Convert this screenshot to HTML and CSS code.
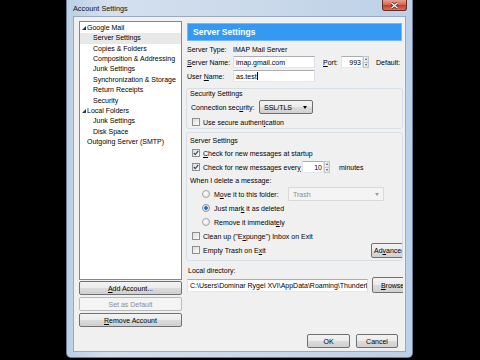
FILE: index.html
```html
<!DOCTYPE html>
<html>
<head>
<meta charset="utf-8">
<title>Account Settings</title>
<link rel="stylesheet" href="styles.css">
</head>
<body>
<div class="window">
  <div class="titlebar">
    <span class="title">Account Settings</span>
    <span class="close"><svg width="9" height="7" viewBox="0 0 9 7"><path d="M1.5 1 L7.5 6 M7.5 1 L1.5 6" stroke="#3a2020" stroke-width="2.6"/><path d="M1.5 1 L7.5 6 M7.5 1 L1.5 6" stroke="#fff" stroke-width="1.3"/></svg></span>
  </div>
  <div class="client">
    <div class="main">
      <div class="leftcol">
        <div class="tree">
          <div class="ti top"><span class="exp"></span>Google Mail</div>
          <div class="ti sel">Server Settings</div>
          <div class="ti">Copies &amp; Folders</div>
          <div class="ti">Composition &amp; Addressing</div>
          <div class="ti">Junk Settings</div>
          <div class="ti">Synchronization &amp; Storage</div>
          <div class="ti">Return Receipts</div>
          <div class="ti">Security</div>
          <div class="ti top"><span class="exp"></span>Local Folders</div>
          <div class="ti">Junk Settings</div>
          <div class="ti">Disk Space</div>
          <div class="ti top leaf">Outgoing Server (SMTP)</div>
        </div>
        <div class="btn side"><u>A</u>dd Account...</div>
        <div class="btn side disabled">Set as Default</div>
        <div class="btn side"><u>R</u>emove Account</div>
      </div>
      <div class="rightcol">
        <div class="pagehead">Server Settings</div>
        <div class="frow r1"><span class="lbl">Server Type:</span><span>IMAP Mail Server</span></div>
        <div class="frow r2">
          <span class="lbl"><u>S</u>erver Name:</span>
          <span class="input w-host">imap.gmail.com</span>
          <span class="port-lbl"><u>P</u>ort:</span>
          <span class="spin"><span class="input num">993</span><span class="arrows"><span class="up"></span><span class="dn"></span></span></span>
          <span class="deflbl">Default:</span>
        </div>
        <div class="frow r3">
          <span class="lbl">User <u>N</u>ame:</span>
          <span class="input w-host">as.test<span class="caret"></span></span>
        </div>

        <div class="group sec">
          <div class="cap">Security Settings</div>
          <div class="crow conn">
            <span class="conn-lbl">Connection sec<u>u</u>rity:</span>
            <span class="select">SSL/TLS<span class="tri"></span></span>
          </div>
          <div class="crow auth"><span class="cb"></span><span>Use secure authent<u>i</u>cation</span></div>
        </div>

        <div class="group srv">
          <div class="cap">Server Settings</div>
          <div class="crow"><span class="cb on"><svg width="6" height="6" viewBox="0 0 6 6"><path d="M0.8 3 L2.3 4.6 L5.3 0.9" fill="none" stroke="#3c4d6e" stroke-width="1.3"/></svg></span><span><u>C</u>heck for new messages at startup</span></div>
          <div class="crow"><span class="cb on"><svg width="6" height="6" viewBox="0 0 6 6"><path d="M0.8 3 L2.3 4.6 L5.3 0.9" fill="none" stroke="#3c4d6e" stroke-width="1.3"/></svg></span><span class="every-lbl">Check for new messages ever<u>y</u></span>
            <span class="spin small"><span class="input num">10</span><span class="arrows"><span class="up"></span><span class="dn"></span></span></span>
            <span class="minutes">minutes</span>
          </div>
          <div class="crow del">When I delete a message:</div>
          <div class="crow ind"><span class="rb"></span><span class="move-lbl">M<u>o</u>ve it to this folder:</span><span class="select dis">Trash<span class="tri"></span></span></div>
          <div class="crow ind"><span class="rb on"></span><span>Just mar<u>k</u> it as deleted</span></div>
          <div class="crow ind"><span class="rb"></span><span>Remove it immediat<u>e</u>ly</span></div>
          <div class="crow"><span class="cb"></span><span>Clean up ("E<u>x</u>punge") Inbox on Exit</span></div>
          <div class="crow last"><span class="cb"></span><span>Empty Trash on E<u>x</u>it</span><span class="btn adv">Ad<u>v</u>anced...</span></div>
        </div>

        <div class="loclbl">Local directory:</div>
        <div class="locrow">
          <span class="input path">C:\Users\Dominar Rygel XVI\AppData\Roaming\Thunderbird\Profiles</span>
          <span class="btn browse"><u>B</u>rowse...</span>
        </div>
      </div>
    </div>
    <div class="footer">
      <span class="btn ok">OK</span>
      <span class="btn cancel">Cancel</span>
    </div>
  </div>
</div>
</body>
</html>
```

FILE: styles.css
```css
* { box-sizing: border-box; }
html, body { margin: 0; padding: 0; }
body {
  background: #000;
  width: 480px;
  height: 360px;
  overflow: hidden;
  font-family: "Liberation Sans", Arial, sans-serif;
  font-size: 7px;
  color: #000;
}
u { text-decoration: underline; text-underline-offset: 1px; }

.window {
  margin-left: 66px;
  width: 347px;
  height: 358px;
  display: flex;
  flex-direction: column;
  padding: 0 6px 5px 6px;
  border: 1px solid #6c7f96;
  border-top: none;
  border-radius: 0 0 5px 5px;
  background: linear-gradient(to right, #bccfe6, #d4e0ee 12%, #c9d8ea 60%, #bcd0e7);
}
.titlebar {
  height: 16px;
  display: flex;
  align-items: center;
  flex: none;
}
.title { font-size: 7.3px; color: #111; }
.close {
  margin-left: auto;
  margin-right: -1px;
  align-self: flex-start;
  width: 25px;
  height: 11px;
  border: 1px solid #6b2b24;
  border-top: none;
  border-radius: 0 0 3px 3px;
  background: linear-gradient(#e8a08f, #d46a55 45%, #c0402c 55%, #d8735c);
  display: flex;
  align-items: center;
  justify-content: center;
}
.close svg { display: block; }

.client {
  flex: 1;
  background: #f0f0f0;
  border: 1px solid #97aac1;
  display: flex;
  flex-direction: column;
  padding: 4px 0 3px 5px;
}
.main { display: flex; gap: 4px; }
.leftcol { width: 103px; display: flex; flex-direction: column; }
.tree {
  height: 259px;
  border: 1px solid #828790;
  background: #fff;
  padding-top: 1px;
}
.ti {
  height: 10.36px;
  line-height: 10.36px;
  padding-left: 13px;
  white-space: nowrap;
  color: #000;
}
.ti.top { padding-left: 2px; }
.ti.top.leaf { padding-left: 7px; }
.ti.sel { background: #e8e8e8; }
.exp {
  display: inline-block;
  width: 0;
  height: 0;
  border-left: 4px solid transparent;
  border-bottom: 4px solid #333;
  margin-right: 1px;
  vertical-align: 0;
}

.btn {
  display: flex;
  align-items: center;
  justify-content: center;
  height: 14px;
  border: 1px solid #707070;
  border-radius: 2px;
  background: linear-gradient(#f3f3f3, #ebebeb 50%, #dcdcdc 50%, #d0d0d0);
  white-space: nowrap;
  flex: none;
}
.btn.side { margin-top: 2px; }
.tree + .btn.side { margin-top: 1px; }
.btn.disabled {
  border-color: #b7bbbe;
  background: #f4f4f4;
  color: #8c8c8c;
}

.rightcol { width: 217px; overflow: hidden; display: flex; flex-direction: column; }
.pagehead {
  margin: 2px 1px 0 1px;
  height: 18px;
  background: #3399f3;
  border: 1px solid #77b6f2;
  color: #fff;
  font-weight: bold;
  font-size: 8.5px;
  padding-left: 5px;
  display: flex;
  align-items: center;
}
.frow { display: flex; align-items: center; margin-left: 1px; }
.r1 { height: 11px; margin-top: 3px; }
.r2 { height: 12px; margin-top: 1px; }
.r3 { height: 12px; margin-top: 2px; }
.lbl { width: 46px; flex: none; }
.input {
  height: 12px;
  border: 1px solid #abadb3;
  border-color: #abadb3 #dbdfe6 #e3e9ef #e2e3ea;
  background: #fff;
  padding-left: 2px;
  display: flex;
  align-items: center;
  white-space: nowrap;
  overflow: hidden;
  flex: none;
}
.w-host { width: 82px; }
.caret { display: inline-block; width: 1px; height: 8px; background: #000; margin-left: 0.5px; }
.port-lbl { margin-left: 8px; width: 18px; }
.spin { display: flex; height: 12px; flex: none; }
.spin .num { width: 22px; justify-content: flex-end; padding: 0 1px 0 0; }
.arrows {
  width: 6px;
  display: flex;
  flex-direction: column;
  border: 1px solid #c3c6cc;
  background: linear-gradient(to right, #f4f4f4, #e0e0e0);
}
.arrows span { flex: 1; display: flex; align-items: center; justify-content: center; }
.arrows .up { border-bottom: 1px solid #c3c6cc; }
.arrows .up::after { content: ""; border-left: 1.5px solid transparent; border-right: 1.5px solid transparent; border-bottom: 2px solid #555; }
.arrows .dn::after { content: ""; border-left: 1.5px solid transparent; border-right: 1.5px solid transparent; border-top: 2px solid #555; }
.deflbl { margin-left: 7px; }

.group {
  margin-top: 6px;
  border: 1px solid #d5dfe5;
  border-radius: 3px;
  padding: 0 0 1px 3px;
  overflow: hidden;
  flex: none;
}
.group.srv { margin-top: 3px; padding-bottom: 3px; }
.cap { height: 9px; line-height: 9px; }
.srv .cap { margin-top: 3px; margin-bottom: 1px; }
.crow { display: flex; align-items: center; height: 14px; white-space: nowrap; }
.crow.conn { margin-top: 2px; margin-left: 1px; }
.conn-lbl { width: 68px; flex: none; }
.crow.auth { margin-top: 3px; height: 10px; }
.crow.del { height: 13px; }
.crow.ind { padding-left: 12px; }
.select {
  display: flex;
  align-items: center;
  width: 54px;
  height: 14px;
  border: 1px solid #707070;
  border-radius: 2px;
  background: linear-gradient(#f3f3f3, #ebebeb 50%, #dcdcdc 50%, #d0d0d0);
  padding-left: 4px;
  flex: none;
}
.select .tri {
  margin-left: auto;
  margin-right: 5px;
  border-left: 2.5px solid transparent;
  border-right: 2.5px solid transparent;
  border-top: 3px solid #000;
}
.select.dis {
  width: 96px;
  height: 14px;
  border-color: #d9d9d9;
  border-radius: 1px;
  background: #f4f4f4;
  color: #8c8c8c;
}
.select.dis .tri { border-top-color: #9a9a9a; margin-right: 4px; }
.move-lbl { width: 74px; flex: none; }

.cb {
  width: 8px;
  height: 8px;
  border: 1px solid #8e8f8f;
  background: linear-gradient(135deg, #dcdcdc, #fbfbfb);
  margin: 0 3px 0 2px;
  flex: none;
  display: flex;
  align-items: center;
  justify-content: center;
}
.cb svg { display: block; }
.rb {
  width: 8px;
  height: 8px;
  border-radius: 50%;
  border: 1px solid #a3a3a3;
  background: radial-gradient(circle at 40% 40%, #ffffff, #dedede);
  margin-right: 4px;
  flex: none;
}
.rb.on {
  border-color: #8e8f8f;
  background: radial-gradient(circle, #1f5ca8 0, #3b7fcf 1.6px, #e6e6e6 2.2px, #f8f8f8 3.5px);
}
.every-lbl { width: 99px; flex: none; }
.minutes { margin-left: 9px; }
.btn.adv { margin-left: auto; margin-right: -12px; width: 43px; height: 15px; }
.crow.last { height: 14px; }

.loclbl { margin-top: 5px; height: 10px; line-height: 10px; padding-left: 2px; }
.locrow { display: flex; align-items: center; height: 16px; margin-top: 1px; }
.input.path { width: 181px; height: 13px; margin-left: 1px; }
.btn.browse { width: 47px; height: 16px; margin-left: 4px; }

.footer {
  margin-top: auto;
  display: flex;
  justify-content: flex-end;
  gap: 6px;
  padding-right: 7px;
}
.btn.ok { width: 43px; }
.btn.cancel { width: 42px; }
```
